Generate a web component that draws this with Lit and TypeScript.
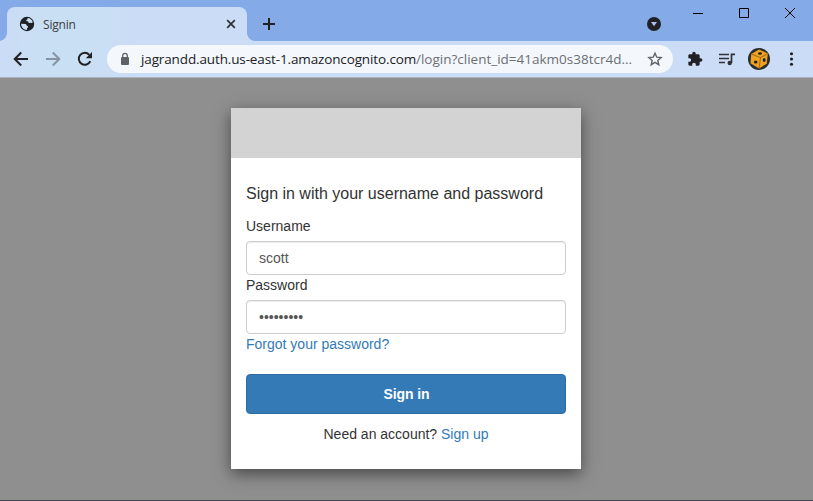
import { LitElement, html, css } from "lit";
import { customElement } from "lit/decorators.js";

@customElement("browser-tabs")
class BrowserTabs extends LitElement {
  static styles = css`
    :host { display: flex; height: 41px; background: #84abe8; box-sizing: border-box; padding-left: 7px; color: #202124; }
    svg { display: block; flex: none; }
    .tab {
      position: relative; margin-top: 7px; width: 240px; height: 34px; box-sizing: border-box;
      padding: 0 8px 0 12px; display: flex; align-items: center; border-radius: 8px 8px 0 0;
      background: linear-gradient(90deg, #cbdcf6, #c9dff3 14%, #c9dff3 38%, #cbdcf6 55%);
      font: 12px "Open Sans", "Noto Sans", sans-serif;
    }
    .tab::before, .tab::after { content: ""; position: absolute; bottom: 0; width: 8px; height: 8px; }
    .tab::before { left: -8px; background: radial-gradient(circle at 0 0, transparent 7.5px, #cbdcf6 8.2px); }
    .tab::after { right: -8px; background: radial-gradient(circle at 100% 0, transparent 7.5px, #cbdcf6 8.2px); }
    .title { flex: 1; margin-left: 8px; color: #3c4043; letter-spacing: -0.2px; }
    .plus { margin: 16px 0 0 14px; }
    .space { flex: 1; }
    .search { margin: 16px 28px 0 0; }
    .win { display: flex; gap: 30px; margin: 5px 15px 0 0; }
  `;
  render() {
    return html`
      <div class="tab">
        <svg width="16" height="16" viewBox="0 0 16 16">
          <circle cx="8" cy="8" r="7.2" fill="#202124"></circle>
          <path d="M8.6 2.1C10.8 2.2 12.8 3.7 13.6 5.6c.2.8-.4 1.7-1.3 1.4-.8-.4-1.5.3-2.3 0-.7-.4-.4-1.2-1-1.6-.7-.4-1.7-.1-1.8-1 0-.8.9-.9 1.4-1.2zM2.1 7.8l4.2.1c1.3.2 1.1 1.6 2 2 .9.3 1.1 1.3.3 1.8-.7.4-.7 1.2-.5 2.3C4.8 14 2.2 11.4 2.1 7.8z" fill="#c9dff3"></path>
        </svg>
        <span class="title">Signin</span>
        <svg width="16" height="16" viewBox="0 0 16 16" fill="none" stroke="#303134" stroke-width="1.7"><path d="M4.2 4.2l7.6 7.6M11.8 4.2l-7.6 7.6"></path></svg>
      </div>
      <svg class="plus" width="16" height="16" viewBox="0 0 16 16" fill="none" stroke="#202124" stroke-width="2"><path d="M8 2v12M2 8h12"></path></svg>
      <div class="space"></div>
      <svg class="search" width="16" height="16" viewBox="0 0 16 16"><circle cx="8" cy="8" r="7" fill="#202124"></circle><path d="M5 6h6l-3 4.2z" fill="#a9c4ef"></path></svg>
      <div class="win">
        <svg width="16" height="16" viewBox="0 0 16 16" fill="none" stroke="#000"><path d="M3 8.5h10"></path></svg>
        <svg width="16" height="16" viewBox="0 0 16 16" fill="none" stroke="#000"><path d="M3.5 3.5h9v9h-9z"></path></svg>
        <svg width="16" height="16" viewBox="0 0 16 16" fill="none" stroke="#000"><path d="M3 3l10 10M13 3L3 13"></path></svg>
      </div>`;
  }
}

@customElement("browser-toolbar")
class BrowserToolbar extends LitElement {
  static styles = css`
    :host {
      display: flex; align-items: center; height: 37px; box-sizing: border-box; padding: 0 12px 1px 11px;
      background: linear-gradient(90deg, #cbdcf6, #c9dff3 5%, #c9dff3 10%, #cbdcf6 17%);
      border-bottom: 1px solid #a9b1bf; color: #202124;
    }
    svg { display: block; flex: none; }
    .nav { display: flex; gap: 12px; width: 96px; flex: none; }
    .address {
      display: flex; align-items: center; width: 566px; height: 28px; box-sizing: border-box;
      padding: 0 8px 0 10px; border-radius: 14px; background: #f4f8fd; flex: none;
    }
    .url { flex: 1; display: flex; margin-left: 8px; white-space: nowrap; font: 13.5px/20px "Open Sans", "Noto Sans", sans-serif; }
    .host { width: 275px; letter-spacing: -0.13px; }
    .path { color: #6b6f74; }
    .tools { display: flex; align-items: center; margin-left: 12px; }
    .list { margin-left: 13px; }
    .avatar { margin-left: 12px; }
    .menu { margin-left: 11px; }
  `;
  render() {
    return html`
      <div class="nav">
        <svg width="20" height="20" viewBox="0 0 20 20" fill="none" stroke="#202124" stroke-width="2"><path d="M17 10H4M10.2 3.5L3.7 10l6.500 6.500"></path></svg>
        <svg width="20" height="20" viewBox="0 0 20 20" fill="none" stroke="#8893a3" stroke-width="2"><path d="M3 10h13M9.800 3.500l6.500 6.500-6.500 6.500"></path></svg>
        <svg width="20" height="20" viewBox="0 0 20 20" fill="none" stroke="#202124" stroke-width="2"><path d="M15.300 12.200A6 6 0 1 1 14.300 5.800"></path><path d="M17 3v6.200h-6.200z" fill="#202124" stroke="none"></path></svg>
      </div>
      <div class="address">
        <svg width="16" height="16" viewBox="0 0 16 16"><rect x="4" y="6" width="8" height="8" rx="1" fill="#5f6368"></rect><path d="M5.700 6.500V4.700a2.300 2.300 0 0 1 4.600 0v1.800" fill="none" stroke="#5f6368" stroke-width="1.300"></path></svg>
        <div class="url"><span class="host">jagrandd.auth.us-east-1.amazoncognito.com</span><span class="path">/login?client_id=41akm0s38tcr4d...</span></div>
        <svg width="20" height="20" viewBox="0 0 20 20" fill="none" stroke="#5f6368" stroke-width="1.400"><path d="M10 4.200l1.800 4 4.300.4-3.300 2.900 1 4.200-3.800-2.300-3.800 2.300 1-4.200-3.300-2.900 4.300-.4z"></path></svg>
      </div>
      <div class="tools">
        <svg width="20" height="20" viewBox="0 0 24 24" fill="#202124"><path d="M20.500 11H19V7c0-1.100-.9-2-2-2h-4V3.500C13 2.120 11.880 1 10.500 1S8 2.120 8 3.500V5H4c-1.100 0-1.990.9-1.990 2v3.800H3.500c1.490 0 2.700 1.210 2.700 2.700s-1.210 2.700-2.700 2.700H2V20c0 1.100.9 2 2 2h3.800v-1.500c0-1.490 1.210-2.700 2.700-2.700s2.700 1.210 2.700 2.700V22H17c1.100 0 2-.9 2-2v-4h1.500c1.380 0 2.500-1.120 2.500-2.500S21.880 11 20.500 11z" transform="translate(2.400 2.400) scale(.8)"></path></svg>
        <svg class="list" width="18" height="18" viewBox="0 0 18 18" fill="none" stroke="#303134" stroke-width="1.700"><path d="M1 4.500h10M1 8.500h10M1 12.500h6M13.500 13V4.300H17"></path><circle cx="11.700" cy="13" r="2.200" fill="#303134" stroke="none"></circle></svg>
        <svg class="avatar" width="22" height="22" viewBox="0 0 22 22">
          <circle cx="11" cy="11" r="11" fill="#292d2f"></circle>
          <path d="M3.200 6L11 1.500l8.800 4-1 10.200L11 20.400l-8.500-5.200z" fill="#efa120"></path>
          <path d="M3.200 6l9.300 3.600 7.300-4.100M12.500 9.600L11 20.400" fill="none" stroke="#8a5b17" stroke-width=".8"></path>
          <g fill="#202124"><ellipse cx="12" cy="5.500" rx="2" ry="1.300"></ellipse><ellipse cx="7.700" cy="14" rx="1.800" ry="1.600"></ellipse><ellipse cx="16.200" cy="12" rx="1.400" ry="1.900"></ellipse></g>
        </svg>
        <svg class="menu" width="20" height="20" viewBox="0 0 20 20" fill="#202124"><circle cx="10.500" cy="4.700" r="1.550"></circle><circle cx="10.500" cy="10" r="1.550"></circle><circle cx="10.500" cy="15.300" r="1.550"></circle></svg>
      </div>`;
  }
}

@customElement("signin-card")
class SigninCard extends LitElement {
  static styles = css`
    :host {
      display: block; width: 350px; height: 361px; background: #fff; box-shadow: 0 5px 15px rgba(0, 0, 0, 0.5);
      font: 14px/20px "Liberation Sans", Arial, sans-serif; color: #333;
    }
    .banner { height: 50px; background: #d3d3d3; }
    form { display: flex; flex-direction: column; padding: 24px 15px 0; }
    .heading { font-size: 16px; line-height: 24px; margin-bottom: 10px; }
    label { margin-bottom: 5px; }
    input {
      height: 34px; box-sizing: border-box; padding: 6px 12px; border: 1px solid #ccc; border-radius: 4px; outline: none;
      font: inherit; color: #555; background: #fff; box-shadow: inset 0 1px 1px rgba(0, 0, 0, 0.075);
    }
    a { color: #337ab7; text-decoration: none; }
    button {
      height: 40px; margin: 20px 0 10px; padding: 1px 5px 1px 6px; border: 1px solid #2e6da4; border-radius: 4px; background: #337ab7;
      color: #fff; font: bold 14px/20px "Liberation Sans", Arial, sans-serif; letter-spacing: -0.1px;
    }
    .signup { text-align: center; }
  `;
  render() {
    return html`
      <div class="banner"></div>
      <form>
        <div class="heading">Sign in with your username and password</div>
        <label for="user">Username</label>
        <input id="user" type="text" value="scott" />
        <label for="pass">Password</label>
        <input id="pass" type="password" value="password1" />
        <a>Forgot your password?</a>
        <button type="button">Sign in</button>
        <div class="signup">Need an account? <a>Sign up</a></div>
      </form>`;
  }
}

@customElement("app-root")
class AppRoot extends LitElement {
  static styles = css`
    :host { display: flex; flex-direction: column; width: 813px; height: 501px; overflow: hidden; }
    .page {
      flex: 1; display: flex; justify-content: center; align-items: flex-start; box-sizing: border-box;
      padding: 30px 1px 0 0; background: #8f8f8f; border-bottom: 1px solid #42465a;
    }
  `;
  render() {
    return html`<browser-tabs></browser-tabs><browser-toolbar></browser-toolbar><div class="page"><signin-card></signin-card></div>`;
  }
}
